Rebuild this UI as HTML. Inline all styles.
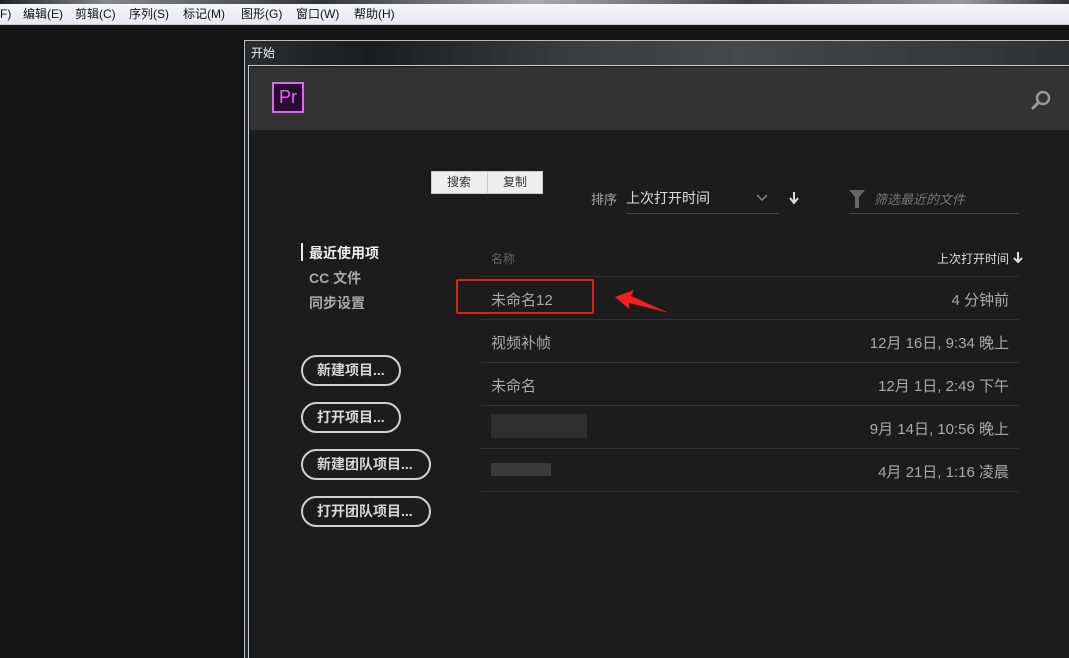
<!DOCTYPE html>
<html style="overflow:hidden;width:1069px;height:658px"><head><meta charset="utf-8"><style>
*{margin:0;padding:0;box-sizing:border-box}
body{width:1069px;height:658px;overflow:hidden;background:#151515;font-family:"Liberation Sans","Microsoft YaHei","Noto Sans CJK SC",sans-serif;position:relative}
.a{position:absolute}
.top{left:0;top:0;width:1069px;height:4px;background:linear-gradient(90deg,#222,#888 10%,#333 30%,#aaa 50%,#444 70%,#999 90%,#333)}
.menu{left:0;top:4px;width:1069px;height:21px;background:linear-gradient(#f4f6f9,#e6e9ee);border-bottom:1px solid #c8ccd2;font-size:12px;color:#111;line-height:21px}
.menu span{position:absolute;top:0}
.win{left:244px;top:40px;width:825px;height:618px;border:1px solid #bbb;border-right:none;border-bottom:none;background:linear-gradient(90deg,#2a2d30,#1a1d20 15%,#3a3d40 40%,#45484b 60%,#2e3134)}
.title{left:251px;top:44px;font-size:12px;color:#eee}
.inner{left:248px;top:65px;width:821px;height:593px;border:1px solid #ccc;border-right:none;border-bottom:none;background:#1c1c1c}
.hdr{left:250px;top:67px;width:819px;height:63px;background:#333}
.t{color:#ccc;font-size:14px;white-space:nowrap}
.btn{border:2px solid #d0d0d0;border-radius:16px;height:31px;color:#d8d8d8;font-size:14px;font-weight:bold;line-height:27px;padding-left:14px}
.sep{left:481px;width:538px;height:1px;background:#333}
.rt{color:#aaa;font-size:15px;text-align:right;right:60px}
.lt{color:#aaa;font-size:15px;left:491px}
</style></head><body>
<div class="a top"></div>
<div class="a menu"><span style="left:0">F)</span><span style="left:23px">编辑(E)</span><span style="left:75px">剪辑(C)</span><span style="left:129px">序列(S)</span><span style="left:183px">标记(M)</span><span style="left:241px">图形(G)</span><span style="left:296px">窗口(W)</span><span style="left:354px">帮助(H)</span></div>
<div class="a win"></div>
<div class="a title">开始</div>
<div class="a inner"></div>
<div class="a hdr"></div>
<div class="a" style="left:272px;top:82px;width:32px;height:31px;border:2px solid #d36ee8;background:#2a0a33;color:#d36ee8;font-size:18px;line-height:27px;text-align:center">Pr</div>
<svg class="a" style="left:1030px;top:88px" width="22" height="22" viewBox="0 0 22 22"><circle cx="13" cy="10" r="6" fill="none" stroke="#999" stroke-width="2.5"/><line x1="8.5" y1="14.5" x2="3" y2="20" stroke="#999" stroke-width="3" stroke-linecap="round"/></svg>
<div class="a" style="left:431px;top:171px;width:112px;height:23px;background:#eee;border:1px solid #ccc;font-size:12px;color:#333;line-height:21px"><span style="position:absolute;left:15px">搜索</span><span style="position:absolute;left:55px;top:0;width:1px;height:21px;background:#ccc"></span><span style="position:absolute;left:71px">复制</span></div>
<div class="a t" style="left:591px;top:189px;font-size:13px;color:#aaa">排序</div>
<div class="a t" style="left:626px;top:188px;font-size:14px;color:#ddd">上次打开时间</div>
<div class="a" style="left:626px;top:213px;width:153px;height:1px;background:#444"></div>
<svg class="a" style="left:755px;top:193px" width="14" height="10"><path d="M2 2l5 5 5-5" fill="none" stroke="#888" stroke-width="1.5"/></svg>
<svg class="a" style="left:788px;top:191px" width="12" height="14"><path d="M6 1v10M2 7l4 5 4-5" fill="none" stroke="#ddd" stroke-width="2"/></svg>
<svg class="a" style="left:849px;top:190px" width="16" height="18"><path d="M0 0h16l-6 7v11h-4V7z" fill="#666"/></svg>
<div class="a" style="left:874px;top:189px;font-size:13px;color:#777;font-style:italic">筛选最近的文件</div>
<div class="a" style="left:849px;top:213px;width:170px;height:1px;background:#444"></div>
<div class="a" style="left:301px;top:243px;width:2px;height:18px;background:#eee"></div>
<div class="a t" style="left:309px;top:243px;font-weight:bold;color:#eee">最近使用项</div>
<div class="a t" style="left:309px;top:268px;font-weight:bold;color:#aaa">CC 文件</div>
<div class="a t" style="left:309px;top:293px;font-weight:bold;color:#aaa">同步设置</div>
<div class="a btn" style="left:301px;top:355px;width:100px">新建项目...</div>
<div class="a btn" style="left:301px;top:402px;width:100px">打开项目...</div>
<div class="a btn" style="left:301px;top:449px;width:130px">新建团队项目...</div>
<div class="a btn" style="left:301px;top:496px;width:130px">打开团队项目...</div>
<div class="a" style="left:491px;top:250px;font-size:12px;color:#666">名称</div>
<div class="a" style="left:937px;top:250px;font-size:12px;color:#ddd">上次打开时间</div>
<svg class="a" style="left:1012px;top:251px" width="12" height="13"><path d="M6 1v10M2 7l4 4 4-4" fill="none" stroke="#ddd" stroke-width="2"/></svg>
<div class="a sep" style="top:276px"></div>
<div class="a sep" style="top:319px"></div>
<div class="a sep" style="top:362px"></div>
<div class="a sep" style="top:405px"></div>
<div class="a sep" style="top:448px"></div>
<div class="a sep" style="top:491px"></div>
<div class="a lt" style="top:289px">未命名12</div>
<div class="a lt" style="top:332px">视频补帧</div>
<div class="a lt" style="top:375px">未命名</div>
<div class="a" style="left:491px;top:414px;width:96px;height:24px;background:#2f2f2f"></div>
<div class="a" style="left:491px;top:463px;width:60px;height:13px;background:#3a3a3a"></div>
<div class="a rt" style="top:289px">4 分钟前</div>
<div class="a rt" style="top:332px">12月 16日, 9:34 晚上</div>
<div class="a rt" style="top:375px">12月 1日, 2:49 下午</div>
<div class="a rt" style="top:418px">9月 14日, 10:56 晚上</div>
<div class="a rt" style="top:461px">4月 21日, 1:16 凌晨</div>
<div class="a" style="left:456px;top:279px;width:138px;height:35px;border:2px solid #e02020;border-radius:2px"></div>
<svg class="a" style="left:0;top:0" width="1069" height="658"><path d="M615 297L634 290 631 296 669 313 629 303 629 309z" fill="#f02020"/></svg>
</body></html>
